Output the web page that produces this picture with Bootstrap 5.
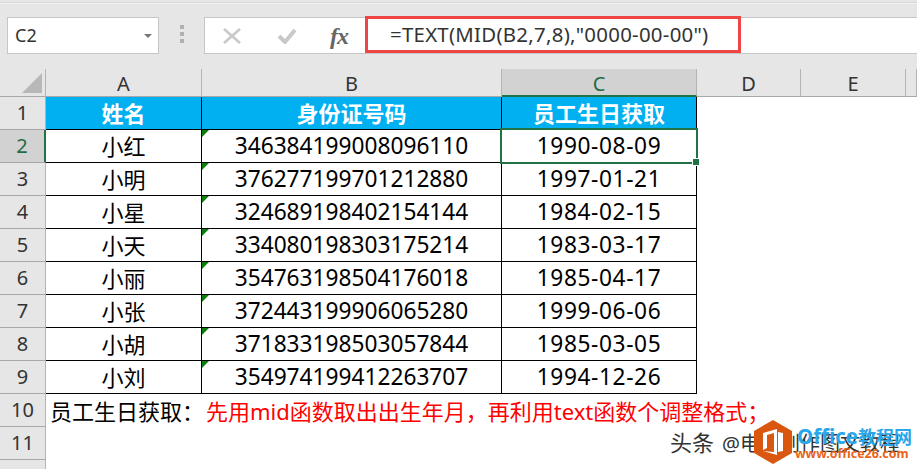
<!DOCTYPE html>
<html lang="zh"><head><meta charset="utf-8">
<link href="https://cdn.jsdelivr.net/npm/bootstrap@5.3.0/dist/css/bootstrap.min.css" rel="stylesheet">
<style>
html,body{margin:0;height:469px;overflow:hidden;background:#fff}
body{font-family:"Noto Sans","Noto Sans CJK SC",sans-serif;color:#000;position:relative}
.topbar{height:69px;background:#e6e6e6;border-top:2px solid #fff0;box-shadow:inset 0 1px 0 #d8d8d8,inset 0 2px 0 #f2f2f2;padding:15px 0 0 7px}
.namebox{width:152px;height:37px;background:#fff;border:1px solid #c6c6c6;padding-left:7px;font-size:18px;color:#333;line-height:33px}
.caret-mini{width:0;height:0;border-left:4px solid transparent;border-right:4px solid transparent;border-top:4px solid #777;margin-right:6px}
.dotcol{width:45px;gap:3px}
.dotcol i{display:block;width:4px;height:4px;background:#b0b0b0}
.fxbar{flex:1;height:37px;background:#fff;border:1px solid #c6c6c6;border-right:0;position:relative}
.fxbtns{width:161px}
.fxglyph{font-family:"Liberation Serif",serif;font-style:italic;font-weight:700;font-size:24px;color:#666;line-height:1;letter-spacing:-1px}
.formula{font-size:20.4px;letter-spacing:.27px;color:#333;padding-left:24px;line-height:33px;white-space:nowrap}
.redbox{position:absolute;left:160px;top:-2px;width:376px;height:37px;border:3px solid #f04545}
.sheet{display:grid;grid-template-columns:46px 156px 300px 195px 104px 105px 11px;grid-template-rows:28px repeat(11,33px) 10px}
.hd{background:#e6e6e6;display:flex;align-items:center;justify-content:center;font-size:20px;color:#333;border-right:1px solid #b4b4b4;border-bottom:1px solid #a8a8a8;line-height:1}
.hd.top{padding-top:3px}
.hd.on{background:#d2d2d2;color:#1f6b46;border-bottom:2px solid #217346}
.hd.rowon{background:#d2d2d2;color:#1f6b46;border-right:2px solid #217346}
.corner{position:relative}
.corner::after{content:"";position:absolute;right:3px;bottom:3px;border-style:solid;border-width:0 0 20px 20px;border-color:transparent transparent #b8b8b8 transparent}
.cel{display:flex;align-items:center;justify-content:center;border-right:1px solid #000;border-bottom:1px solid #000;font-size:22px;line-height:1;position:relative;white-space:nowrap}
.num{font-size:22.7px}
.dt{font-size:22.7px;letter-spacing:.6px}
.ch{background:#00b0f0;color:#fff;font-weight:700}
.flag::before{content:"";position:absolute;left:0;top:0;border-style:solid;border-width:7px 7px 0 0;border-color:#0a7d0a transparent transparent transparent}
.blank{background:#fff}
.note{grid-column:2 / span 6;display:flex;align-items:center;font-size:22px;padding-left:4px;white-space:nowrap;line-height:1}
.note b{font-weight:400;color:#f00;margin-left:2px}
.selcell{position:absolute;left:500px;top:128px;width:198px;height:36px;border:2px solid #217346;pointer-events:none}
.selcell::after{content:"";position:absolute;right:-4px;bottom:-4px;width:8px;height:8px;background:#217346;border:1px solid #fff}
.wm{position:absolute;left:670px;top:431px;font-size:20px;line-height:1;color:#333;white-space:nowrap}
.wm em{font-style:normal;font-size:22px;margin-right:8px}
.logo{position:absolute;left:754px;top:420px}
.wmt1{position:absolute;left:797px;top:426px;font-size:20.5px;font-weight:700;color:#2aa7e8;line-height:1;white-space:nowrap}
.wmt1 small{font-size:18px;font-weight:700}
.wmt2{position:absolute;left:795px;top:448px;font-size:12.4px;font-weight:700;color:#e8641b;line-height:1;white-space:nowrap}
</style></head><body>
<div class="topbar d-flex align-items-start">
 <div class="namebox d-flex align-items-center justify-content-between"><span>C2</span><span class="caret-mini"></span></div>
 <div class="dotcol d-flex flex-column align-items-center pt-2"><i></i><i></i><i></i></div>
 <div class="fxbar d-flex">
  <div class="fxbtns d-flex align-items-center">
   <svg width="18" height="16" viewBox="0 0 18 16" style="margin-left:18px"><path d="M1 1L17 15M17 1L1 15" stroke="#c9c9c9" stroke-width="2.6"/></svg>
   <svg width="20" height="16" viewBox="0 0 20 16" style="margin-left:36px"><path d="M2 8L8 14L18 2" fill="none" stroke="#c9c9c9" stroke-width="4"/></svg>
   <span class="fxglyph" style="margin-left:33px">fx</span>
  </div>
  <div class="formula">=TEXT(MID(B2,7,8),"0000-00-00")</div>
  <div class="redbox"></div>
 </div>
</div>
<div class="sheet">
 <div class="hd corner"></div><div class="hd top">A</div><div class="hd top">B</div><div class="hd top on">C</div><div class="hd top">D</div><div class="hd top">E</div><div class="hd"></div>

 <div class="hd">1</div><div class="cel ch">姓名</div><div class="cel ch">身份证号码</div><div class="cel ch">员工生日获取</div><div class="blank" style="grid-column:span 3"></div>
 <div class="hd rowon">2</div><div class="cel">小红</div><div class="cel num flag">346384199008096110</div><div class="cel dt">1990-08-09</div><div class="blank" style="grid-column:span 3"></div>
 <div class="hd">3</div><div class="cel">小明</div><div class="cel num flag">376277199701212880</div><div class="cel dt">1997-01-21</div><div class="blank" style="grid-column:span 3"></div>
 <div class="hd">4</div><div class="cel">小星</div><div class="cel num flag">324689198402154144</div><div class="cel dt">1984-02-15</div><div class="blank" style="grid-column:span 3"></div>
 <div class="hd">5</div><div class="cel">小天</div><div class="cel num flag">334080198303175214</div><div class="cel dt">1983-03-17</div><div class="blank" style="grid-column:span 3"></div>
 <div class="hd">6</div><div class="cel">小丽</div><div class="cel num flag">354763198504176018</div><div class="cel dt">1985-04-17</div><div class="blank" style="grid-column:span 3"></div>
 <div class="hd">7</div><div class="cel">小张</div><div class="cel num flag">372443199906065280</div><div class="cel dt">1999-06-06</div><div class="blank" style="grid-column:span 3"></div>
 <div class="hd">8</div><div class="cel">小胡</div><div class="cel num flag">371833198503057844</div><div class="cel dt">1985-03-05</div><div class="blank" style="grid-column:span 3"></div>
 <div class="hd">9</div><div class="cel">小刘</div><div class="cel num flag">354974199412263707</div><div class="cel dt">1994-12-26</div><div class="blank" style="grid-column:span 3"></div>
 <div class="hd">10</div><div class="note"><span>员工生日获取：</span><b>先用mid函数取出出生年月，再利用text函数个调整格式；</b></div>
 <div class="hd">11</div><div class="blank" style="grid-column:span 6"></div>
 <div class="hd"></div><div class="blank" style="grid-column:span 6"></div>
</div>
<div class="selcell"></div>
<div class="wm"><em>头条</em>@电脑创作图文教程</div>
<svg class="logo" width="38" height="44" viewBox="0 0 38 44"><path d="M19 0L38 11V33L19 44L0 33V11Z" fill="#d9570f"/><path d="M9 13L23 9V35L9 31L20 32V13L13 15V28L9 30Z" fill="#fff"/><path d="M24 12L29 13V31L24 32Z" fill="#fff"/></svg>
<div class="wmt1">Office<small>教程网</small></div>
<div class="wmt2">www.office26.com</div>
</body></html>
